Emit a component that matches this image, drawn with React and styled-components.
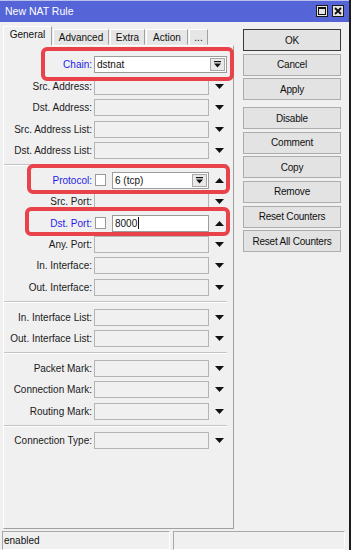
import React from 'react';
import styled, { createGlobalStyle } from 'styled-components';

const GlobalStyle = createGlobalStyle`
  html, body {
    margin: 0;
    padding: 0;
    background: #ffffff;
  }
  body {
    font-family: "Liberation Sans", Arial, sans-serif;
    font-size: 10px;
    color: #111;
  }
`;

const rows = [
  [
    { label: 'Chain:', kind: 'chain', value: 'dstnat', blue: true },
    { label: 'Src. Address:' },
    { label: 'Dst. Address:' },
    { label: 'Src. Address List:' },
    { label: 'Dst. Address List:' },
  ],
  [
    { label: 'Protocol:', kind: 'check', value: '6 (tcp)', blue: true, drop: true, up: true },
    { label: 'Src. Port:' },
    { label: 'Dst. Port:', kind: 'check', value: '8000', blue: true, up: true, caret: true },
    { label: 'Any. Port:' },
    { label: 'In. Interface:' },
    { label: 'Out. Interface:' },
  ],
  [
    { label: 'In. Interface List:' },
    { label: 'Out. Interface List:' },
  ],
  [
    { label: 'Packet Mark:' },
    { label: 'Connection Mark:' },
    { label: 'Routing Mark:' },
  ],
  [
    { label: 'Connection Type:' },
  ],
];

const tabs = [
  { name: 'General', w: 49, active: true },
  { name: 'Advanced', w: 56 },
  { name: 'Extra', w: 35 },
  { name: 'Action', w: 42 },
  { name: '...', w: 19 },
];

const buttons = [
  { name: 'OK', primary: true },
  { name: 'Cancel' },
  { name: 'Apply' },
  { name: 'Disable', space: true },
  { name: 'Comment' },
  { name: 'Copy' },
  { name: 'Remove' },
  { name: 'Reset Counters' },
  { name: 'Reset All Counters' },
];

const marks = [
  { top: 47, left: 41, w: 193, h: 34 },
  { top: 164, left: 27, w: 203, h: 30 },
  { top: 207, left: 25, w: 205, h: 29 },
];

const ArrowDown = () => (
  <svg width="9" height="5" viewBox="0 0 9 5">
    <polygon points="0,0 9,0 4.5,5" fill="#111" />
  </svg>
);

const ArrowUp = () => (
  <svg width="9" height="5" viewBox="0 0 9 5">
    <polygon points="0,5 9,5 4.5,0" fill="#111" />
  </svg>
);

const DropIcon = () => (
  <svg width="7" height="7" viewBox="0 0 7 7">
    <rect x="0" y="0" width="7" height="1.2" fill="#111" />
    <polygon points="0,2.5 7,2.5 3.5,6.5" fill="#111" />
  </svg>
);

const App = () => {
  return (
    <>
      <GlobalStyle />
      <Window>
        <TitleBar>
          <span>New NAT Rule</span>
          <TitleButtons>
            <TitleBtn>
              <svg width="8" height="8" viewBox="0 0 8 8">
                <rect x="0.5" y="0.5" width="7" height="7" fill="none" stroke="#111" strokeWidth="1" />
                <rect x="0.5" y="0.5" width="7" height="1.5" fill="#111" />
              </svg>
            </TitleBtn>
            <TitleBtn>
              <svg width="8" height="8" viewBox="0 0 8 8">
                <path d="M1 1 L7 7 M7 1 L1 7" stroke="#111" strokeWidth="1.8" />
              </svg>
            </TitleBtn>
          </TitleButtons>
        </TitleBar>

        <Body>
          <LeftCol>
            <TabBar>
              {tabs.map((t) => (
                <Tab key={t.name} $w={t.w} $active={t.active}>{t.name}</Tab>
              ))}
            </TabBar>
            <Panel>
              {rows.map((group, gi) => (
                <React.Fragment key={gi}>
                  {gi > 0 && <Divider />}
                  {group.map((r) => (
                    <Row key={r.label}>
                      <Label $blue={r.blue}>{r.label}</Label>
                      {r.kind === 'chain' && (
                        <Field $w={133} $filled>
                          <FieldText>{r.value}</FieldText>
                          <DropBtn><DropIcon /></DropBtn>
                        </Field>
                      )}
                      {r.kind === 'check' && (
                        <>
                          <Check />
                          <Field $w={97} $filled $gap={6}>
                            <FieldText>
                              {r.value}
                              {r.caret && <Caret />}
                            </FieldText>
                            {r.drop && <DropBtn><DropIcon /></DropBtn>}
                          </Field>
                        </>
                      )}
                      {!r.kind && <Field $w={115} />}
                      {r.kind !== 'chain' && (
                        <ArrowCell>{r.up ? <ArrowUp /> : <ArrowDown />}</ArrowCell>
                      )}
                    </Row>
                  ))}
                </React.Fragment>
              ))}
            </Panel>
          </LeftCol>

          <RightCol>
            {buttons.map((b) => (
              <Button key={b.name} $primary={b.primary} $space={b.space}>{b.name}</Button>
            ))}
          </RightCol>
        </Body>

        <StatusBar>
          <StatusBox $w={168}>enabled</StatusBox>
          <StatusBox />
        </StatusBar>

        {marks.map((m, i) => (
          <Highlight key={i} $top={m.top} $left={m.left} $w={m.w} $h={m.h} />
        ))}
      </Window>
    </>
  );
};

const Window = styled.div`
  position: relative;
  width: 351px;
  height: 550px;
  box-sizing: border-box;
  display: flex;
  flex-direction: column;
  background: #f0f0f0;
  border-right: 2px solid #1c1c1c;
`;

const TitleBar = styled.div`
  height: 22px;
  box-sizing: border-box;
  border-top: 1px solid #b9c0ee;
  background: #5565d8;
  color: #fff;
  font-size: 10.5px;
  display: flex;
  align-items: center;
  justify-content: space-between;
  padding: 0 5px 1px 5px;
`;

const TitleButtons = styled.div`
  display: flex;
  gap: 4px;
`;

const TitleBtn = styled.div`
  width: 12px;
  height: 12px;
  box-sizing: border-box;
  border: 1px solid #1a1a1a;
  background: #e4e4e4;
  display: flex;
  align-items: center;
  justify-content: center;
`;

const Body = styled.div`
  flex: 1;
  display: flex;
  min-height: 0;
`;

const LeftCol = styled.div`
  width: 231px;
  margin-left: 3px;
  padding: 4px 0 2px;
  box-sizing: border-box;
  display: flex;
  flex-direction: column;
`;

const TabBar = styled.div`
  height: 19px;
  display: flex;
  align-items: flex-end;
  gap: 1px;
`;

const Tab = styled.div`
  width: ${({ $w }) => $w}px;
  height: ${({ $active }) => ($active ? 20 : 16)}px;
  margin-bottom: ${({ $active }) => ($active ? -1 : 0)}px;
  box-sizing: border-box;
  border: 1px solid;
  border-color: #ffffff #a0a0a0 transparent #ffffff;
  background: ${({ $active }) => ($active ? '#f0f0f0' : '#e6e6e6')};
  display: flex;
  align-items: ${({ $active }) => ($active ? 'flex-start' : 'center')};
  padding-top: ${({ $active }) => ($active ? 2 : 0)}px;
  justify-content: center;
  font-size: 10px;
  position: relative;
  z-index: ${({ $active }) => ($active ? 1 : 0)};
`;

const Panel = styled.div`
  flex: 1;
  box-sizing: border-box;
  border: 1px solid;
  border-color: #ffffff #a0a0a0 #a0a0a0 #ffffff;
  padding-top: 8.3px;
`;

const Row = styled.div`
  height: 21.4px;
  display: flex;
  align-items: center;
`;

const Label = styled.div`
  width: 88px;
  text-align: right;
  white-space: nowrap;
  color: ${({ $blue }) => ($blue ? '#2323e6' : '#1a1a1a')};
`;

const Field = styled.div`
  width: ${({ $w }) => $w}px;
  height: 17px;
  margin-left: ${({ $gap }) => $gap || 2}px;
  box-sizing: border-box;
  border: 1px solid ${({ $filled }) => ($filled ? '#9c9c9c' : '#b4b4b4')};
  background: ${({ $filled }) => ($filled ? '#ffffff' : '#f0f0f0')};
  display: flex;
  align-items: center;
  justify-content: space-between;
  padding-left: 2px;
  padding-right: 1px;
`;

const FieldText = styled.span`
  display: flex;
  align-items: center;
  color: #111;
`;

const Caret = styled.span`
  width: 1px;
  height: 12px;
  background: #111;
  margin-left: 1px;
`;

const DropBtn = styled.div`
  width: 15px;
  height: 13px;
  box-sizing: border-box;
  border: 1px solid #a8a8a8;
  background: #e8e8e8;
  display: flex;
  align-items: center;
  justify-content: center;
`;

const Check = styled.div`
  width: 11px;
  height: 12px;
  margin-left: 3px;
  box-sizing: border-box;
  border: 1px solid #9a9a9a;
  background: #fff;
`;

const ArrowCell = styled.div`
  width: 17px;
  margin-left: 2px;
  display: flex;
  justify-content: center;
`;

const Divider = styled.div`
  height: 0;
  border-top: 1px solid #c4c4c4;
  border-bottom: 1px solid #ffffff;
  margin: 3px 6px 3.4px 0;
`;

const RightCol = styled.div`
  width: 98px;
  margin-left: 9px;
  padding-top: 7px;
  display: flex;
  flex-direction: column;
  gap: 2.6px;
`;

const Button = styled.div`
  height: 22px;
  box-sizing: border-box;
  border: 1px solid ${({ $primary }) => ($primary ? '#3a3a3a' : '#adadad')};
  background: #e3e3e3;
  display: flex;
  align-items: center;
  justify-content: center;
  font-size: 10px;
  letter-spacing: -0.2px;
  margin-top: ${({ $space }) => ($space ? 4.4 : 0)}px;
`;

const StatusBar = styled.div`
  height: 19px;
  display: flex;
  gap: 3px;
  padding: 0 4px 0 2px;
`;

const StatusBox = styled.div`
  ${({ $w }) => ($w ? `width: ${$w}px;` : 'flex: 1;')}
  box-sizing: border-box;
  border: 1px solid;
  border-color: #a8a8a8 #ffffff #ffffff #a8a8a8;
  display: flex;
  align-items: center;
  padding-left: 1px;
  font-size: 10px;
`;

const Highlight = styled.div`
  position: absolute;
  top: ${({ $top }) => $top}px;
  left: ${({ $left }) => $left}px;
  width: ${({ $w }) => $w}px;
  height: ${({ $h }) => $h}px;
  box-sizing: border-box;
  border: 4px solid #e8434a;
  border-radius: 6px;
  pointer-events: none;
`;

export default App;
